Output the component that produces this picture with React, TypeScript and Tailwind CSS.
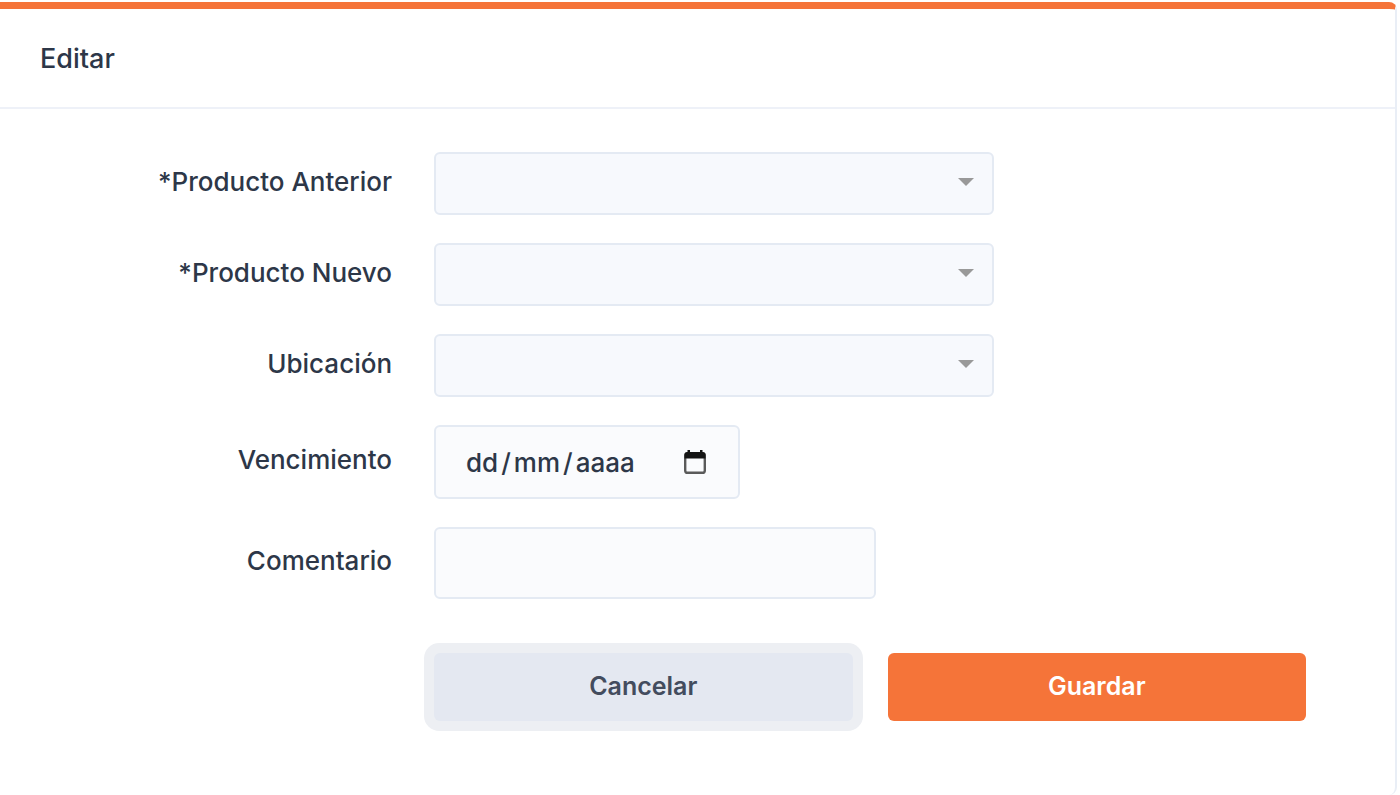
import type { ReactNode } from 'react';
import { useRef, useState } from 'react';
import { clsx } from 'clsx';

interface FieldRowProps {
  id: string;
  label: string;
  children: ReactNode;
}

function FieldRow({ id, label, children }: FieldRowProps) {
  return (
    <div className="grid grid-cols-[28%_1fr] items-center gap-x-[42px]">
      <label htmlFor={id} className="pb-1 text-right text-[26px] leading-8 font-medium">
        {label}
      </label>
      <div>{children}</div>
    </div>
  );
}

function SelectField({ id, label }: { id: string; label: string }) {
  return (
    <FieldRow id={id} label={label}>
      <div className="relative w-full max-w-[560px]">
        <select
          id={id}
          name={id}
          className="block h-[63px] w-full appearance-none rounded-md border-2 border-[#e4eaf3] bg-[#f7f9fd] px-8 text-[26px]"
        >
          <option value=""></option>
        </select>
        <svg
          viewBox="0 0 16 8"
          className="pointer-events-none absolute top-[26px] right-5 h-2 w-4"
          aria-hidden="true"
        >
          <path d="M0 0h16L8 8z" fill="#999999" />
        </svg>
      </div>
    </FieldRow>
  );
}

const SELECTS = [
  { id: 'productoAnterior', label: '*Producto Anterior' },
  { id: 'productoNuevo', label: '*Producto Nuevo' },
  { id: 'ubicacion', label: 'Ubicación' },
];

const inputStyles = 'rounded-md border-2 border-[#e4eaf3] bg-[#fafbfd] text-[26px]';
const segmentStyles = 'field-sizing-content font-medium outline-none placeholder:text-[#2d3748]';
const buttonStyles = 'h-[68px] flex-1 rounded-md text-[25px] font-semibold';

export default function App() {
  const [date, setDate] = useState({ day: '', month: '', year: '' });
  const [comment, setComment] = useState('');
  const dayRef = useRef<HTMLInputElement>(null);

  return (
    <main className="min-h-screen bg-white pt-[2px] pr-[3px] font-[Inter,sans-serif] text-[#2d3748]">
      <section className="rounded-r-lg border-t-[7px] border-r-2 border-t-[#f57439] border-r-[#e9eef6] pb-[74px]">
        <header className="border-b-2 border-[#eef1f8] px-10 pt-[34px] pb-8">
          <h1 className="text-[27px] leading-8 font-medium">Editar</h1>
        </header>

        <form className="pt-[43px] pl-[2px]" onSubmit={(e) => e.preventDefault()}>
          <div className="flex flex-col gap-7">
            {SELECTS.map((field) => (
              <SelectField key={field.id} id={field.id} label={field.label} />
            ))}

            <FieldRow id="vencimiento" label="Vencimiento">
              <div
                className={clsx(
                  inputStyles,
                  'flex h-[74px] w-full max-w-[306px] items-center justify-between pr-8 pl-[30px]'
                )}
              >
                <div className="flex items-center gap-[3px] font-medium">
                  <input
                    ref={dayRef}
                    id="vencimiento"
                    type="text"
                    inputMode="numeric"
                    maxLength={2}
                    placeholder="dd"
                    value={date.day}
                    onChange={(e) => setDate({ ...date, day: e.target.value })}
                    className={segmentStyles}
                  />
                  <span>/</span>
                  <input
                    type="text"
                    inputMode="numeric"
                    aria-label="Mes"
                    maxLength={2}
                    placeholder="mm"
                    value={date.month}
                    onChange={(e) => setDate({ ...date, month: e.target.value })}
                    className={segmentStyles}
                  />
                  <span>/</span>
                  <input
                    type="text"
                    inputMode="numeric"
                    aria-label="Año"
                    maxLength={4}
                    placeholder="aaaa"
                    value={date.year}
                    onChange={(e) => setDate({ ...date, year: e.target.value })}
                    className={segmentStyles}
                  />
                </div>
                <button
                  type="button"
                  aria-label="Abrir calendario"
                  className="shrink-0"
                  onClick={() => dayRef.current?.focus()}
                >
                  <svg viewBox="0 0 22 24" className="h-6 w-[22px]" aria-hidden="true">
                    <rect
                      x="1.2"
                      y="3.2"
                      width="19.6"
                      height="19.6"
                      rx="2.4"
                      fill="none"
                      stroke="#5a5a5a"
                      strokeWidth="2.4"
                    />
                    <path
                      d="M3.500 0h2.500v2h10V0h2.500v2A3 3 0 0 1 21.500 5v3.500H.5V5a3 3 0 0 1 3-3z"
                      fill="#141414"
                    />
                  </svg>
                </button>
              </div>
            </FieldRow>

            <FieldRow id="comentario" label="Comentario">
              <input
                id="comentario"
                type="text"
                value={comment}
                onChange={(e) => setComment(e.target.value)}
                className={clsx(inputStyles, 'block h-[72px] w-full max-w-[442px] px-8')}
              />
            </FieldRow>
          </div>

          {/* Actions */}
          <div className="grid grid-cols-[28%_1fr] gap-x-[42px] pt-[54px]">
            <div className="col-start-2 flex gap-[35px] pr-[89px]">
              <button
                type="button"
                className={clsx(buttonStyles, 'bg-[#e4e8f1] text-[#434c5e] ring-10 ring-[#edeff3]')}
              >
                Cancelar
              </button>
              <button type="submit" className={clsx(buttonStyles, 'bg-[#f57439] text-white')}>
                Guardar
              </button>
            </div>
          </div>
        </form>
      </section>
    </main>
  );
}
